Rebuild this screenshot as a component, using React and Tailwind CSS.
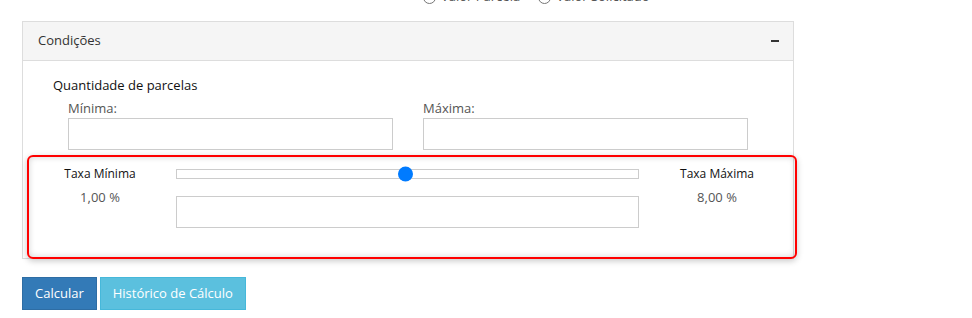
import React from "react";

const Radio = ({ label }) => (
  <label className="flex items-center gap-[5px] text-[#555]">
    <span className="w-[13px] h-[13px] rounded-full border border-[#767676] bg-white"></span>
    <span>{label}</span>
  </label>
);

const TaxaCol = ({ title, value }) => (
  <div className="flex flex-col items-center">
    <div className="h-[18px] leading-[18px] text-[12px] font-medium text-[#111]">{title}</div>
    <div className="mt-[5px] h-[18px] leading-[18px] text-[#555]">{value}</div>
  </div>
);

export default function App() {
  return (
    <div className="w-[972px] h-[318px] overflow-hidden bg-white font-['Open_Sans',sans-serif] text-[13px] text-[#333]">
      {/* radios cut off at the top */}
      <div className="flex items-center gap-[18px] h-[18px] -mt-[12px] pl-[423px]">
        <Radio label="Valor Parcela" />
        <Radio label="Valor Solicitado" />
      </div>

      <div className="ml-[22px] mt-[15px] w-[772px] border border-[#ddd]">
        <div className="h-[39px] flex items-center justify-between px-[15px] bg-[#f5f5f5] border-b border-[#ddd]">
          <span className="text-[#333]">Condições</span>
          <span className="w-[8px] h-[2px] bg-[#333] mr-[-1px]"></span>
        </div>

        <div className="pt-[15px]">
          <div className="pl-[30px] h-[18px] leading-[18px] font-medium text-[#111]">Quantidade de parcelas</div>

          <div className="flex gap-[30px] pl-[45px] mt-[5px]">
            <div className="w-[325px]">
              <div className="h-[18px] leading-[18px] text-[#555] mb-[1px]">Mínima:</div>
              <input className="w-full h-[32px] border border-[#ccc] bg-white outline-none" />
            </div>
            <div className="w-[325px]">
              <div className="h-[18px] leading-[18px] text-[#555] mb-[1px]">Máxima:</div>
              <input className="w-full h-[32px] border border-[#ccc] bg-white outline-none" />
            </div>
          </div>

          <div className="relative ml-[4px] mt-[5px] -mb-[1px] w-[770px] h-[104px] border-2 border-[#ff0000] rounded-[6px] shadow-[0_2px_6px_rgba(0,0,0,0.22),inset_0_0_6px_rgba(0,0,0,0.18)]">
            <div className="grid grid-cols-[142px_463px_1fr] gap-x-[5px] pt-[8px]">
              <TaxaCol title="Taxa Mínima" value="1,00 %" />
              <div className="flex flex-col">
                <div className="h-[18px] flex items-center">
                  <div className="relative w-full h-[10px] border border-[#ccc] bg-white">
                    <span className="absolute left-[221px] top-1/2 -translate-y-1/2 w-[15px] h-[15px] rounded-full bg-[#007bff]"></span>
                  </div>
                </div>
                <input className="mt-[13px] w-full h-[32px] border border-[#ccc] bg-white outline-none" />
              </div>
              <div className="-ml-[5px]">
                <TaxaCol title="Taxa Máxima" value="8,00 %" />
              </div>
            </div>
          </div>
        </div>
      </div>

      <div className="flex gap-[3px] ml-[22px] mt-[18px]">
        <button className="h-[33px] px-[12px] text-[13px] text-white bg-[#337ab7] border border-[#2e6da4]">Calcular</button>
        <button className="h-[33px] px-[12px] text-[13px] text-white bg-[#5bc0de] border border-[#46b8da]">Histórico de Cálculo</button>
      </div>
    </div>
  );
}
